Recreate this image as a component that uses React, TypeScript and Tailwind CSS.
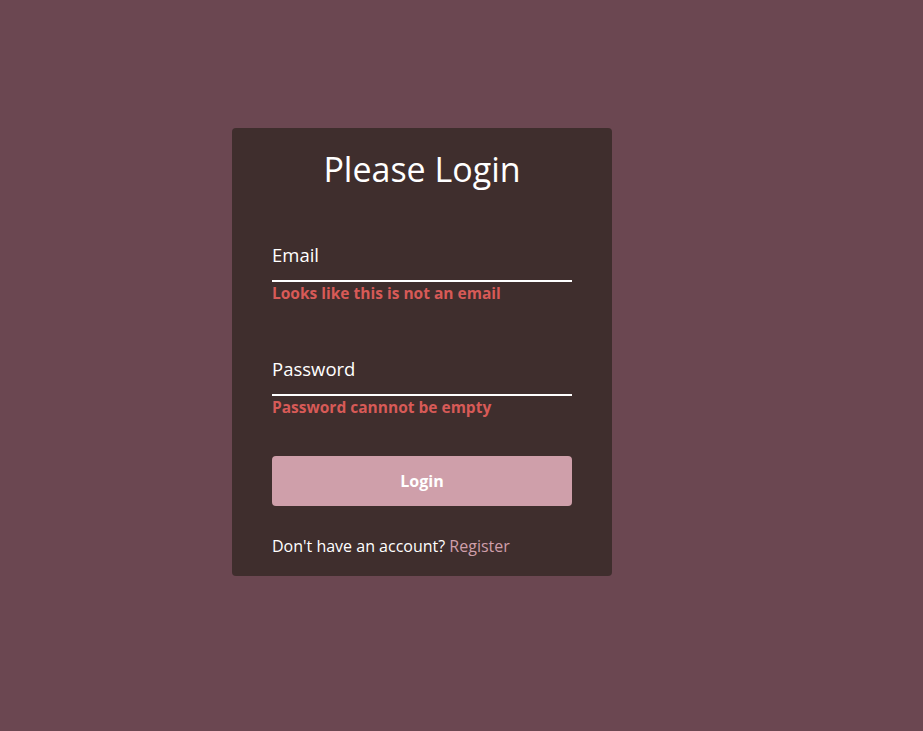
export default function App() {
  return (
    <div className="min-h-screen w-full bg-[#6b4751] flex pl-[232px] pt-[128px] font-['Open_Sans',sans-serif]">
      <div className="w-[380px] h-[448px] bg-[#3f2e2d] rounded-[4px] px-[40px] pt-[21px] pb-[20px] flex flex-col">
        <h1 className="text-center text-white text-[34px] leading-[40px] font-medium">Please Login</h1>

        <form className="flex flex-col mt-[54px]" onSubmit={(e) => e.preventDefault()}>
          <div className="border-b-2 border-white pb-[13px] text-white text-[18.5px] leading-[24px]">Email</div>
          <p className="text-[#d75a57] text-[15.5px] leading-[20px] font-bold mt-[1px]">Looks like this is not an email</p>

          <div className="border-b-2 border-white pb-[13px] text-white text-[18.5px] leading-[24px] mt-[54px]">Password</div>
          <p className="text-[#d75a57] text-[15.5px] leading-[20px] font-bold mt-[1px]">Password cannnot be empty</p>

          <button type="submit" className="mt-[39px] h-[50px] w-full rounded-[4px] bg-[#cf9faa] text-white text-[16px] font-bold">
            Login
          </button>
        </form>

        <p className="mt-[30px] text-white text-[16px] leading-[20px]">
          Don't have an account? <a className="text-[#cf9faa]" href="#">Register</a>
        </p>
      </div>
    </div>
  );
}
